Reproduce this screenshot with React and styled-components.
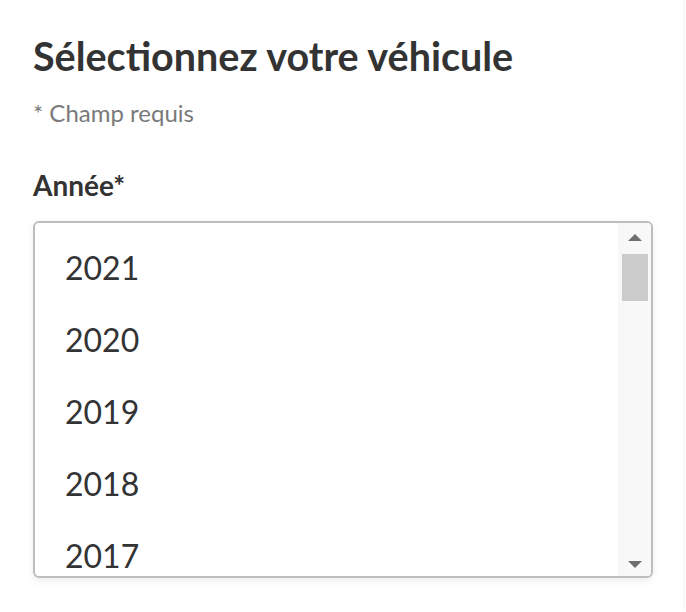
import React from "react";
import styled, { createGlobalStyle } from "styled-components";

const GlobalStyle = createGlobalStyle`
  body {
    margin: 0;
    background: #ffffff;
    font-family: Lato, "Liberation Sans", sans-serif;
    color: #333333;
  }
`;

const Card = styled.div`
  width: 683px;
  min-height: 612px;
  box-sizing: border-box;
  padding: 32px 30px 0 33px;
  background: #ffffff;
  box-shadow: 1px 0 4px rgba(0, 0, 0, 0.06);
`;

const Title = styled.h2`
  margin: 0;
  font-size: 39.5px;
  font-weight: 700;
  line-height: 48px;
  color: #333333;
`;

const Hint = styled.p`
  margin: 18px 0 0;
  font-size: 24px;
  line-height: 29px;
  color: #7a7a7a;
`;

const Label = styled.label`
  display: block;
  margin-top: 41px;
  font-size: 28px;
  font-weight: 700;
  line-height: 34px;
  color: #333333;
`;

const SelectBox = styled.div`
  margin-top: 19px;
  width: 620px;
  height: 357px;
  box-sizing: border-box;
  border: 2px solid #bdbdbd;
  border-radius: 6px;
  display: flex;
  overflow: hidden;
  box-shadow: 0 3px 8px rgba(0, 0, 0, 0.07);
`;

const OptionList = styled.ul`
  flex: 1;
  margin: 0;
  padding: 9px 0 0 30px;
  list-style: none;
  overflow: hidden;
`;

const Option = styled.li`
  height: 72px;
  display: flex;
  align-items: center;
  font-size: 32px;
  line-height: 38px;
  color: #333333;
`;

const Scrollbar = styled.div`
  width: 33px;
  background: #f8f8f8;
  display: flex;
  flex-direction: column;
  align-items: center;
`;

const Arrow = styled.div`
  width: 0;
  height: 0;
  border-left: 7px solid transparent;
  border-right: 7px solid transparent;
  ${(p) =>
    p.$down
      ? "border-top: 7px solid #6e6e6e; margin-top: auto; margin-bottom: 8px;"
      : "border-bottom: 7px solid #6e6e6e; margin-top: 11px;"}
`;

const Thumb = styled.div`
  width: 26px;
  height: 47px;
  margin-top: 13px;
  background: #cbcbcb;
`;

const years = [2021, 2020, 2019, 2018, 2017];

export default function App() {
  return (
    <>
      <GlobalStyle />
      <Card>
        <Title>Sélectionnez votre véhicule</Title>
        <Hint>* Champ requis</Hint>
        <Label>Année*</Label>
        <SelectBox>
          <OptionList>
            {years.map((y) => (
              <Option key={y}>{y}</Option>
            ))}
          </OptionList>
          <Scrollbar>
            <Arrow />
            <Thumb />
            <Arrow $down />
          </Scrollbar>
        </SelectBox>
      </Card>
    </>
  );
}
